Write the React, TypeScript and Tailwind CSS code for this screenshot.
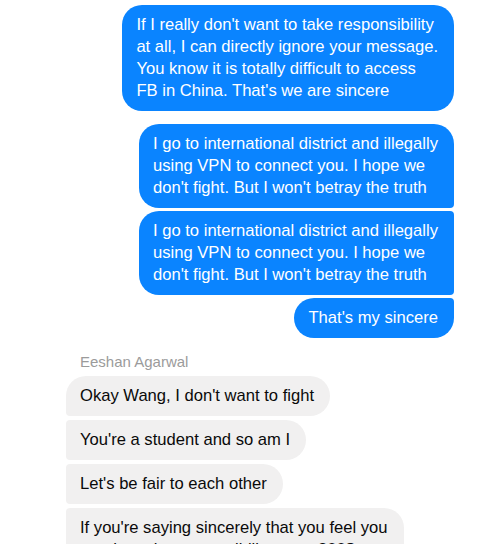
import React from "react";

const font = { fontFamily: '"Liberation Sans", Arial, sans-serif' };

export default function App() {
  return (
    <div
      className="w-[480px] h-[544px] overflow-hidden bg-white text-[16.6px] leading-[22px]"
      style={font}
    >
      <div className="flex flex-col items-end pr-[26px] pt-[5px]">
        <div className="rounded-[20px] bg-[#0a84ff] text-white pl-[14px] pr-[16px] py-[9px] whitespace-nowrap">
          If I really don't want to take responsibility
          <br />
          at all, I can directly ignore your message.
          <br />
          You know it is totally difficult to access
          <br />
          FB in China. That's we are sincere
        </div>
        <div className="mt-[13px] flex flex-col items-end gap-[3px]">
          <div className="rounded-[20px] rounded-br-[4px] bg-[#0a84ff] text-white pl-[14px] pr-[16px] py-[9px] whitespace-nowrap">
            I go to international district and illegally
            <br />
            using VPN to connect you. I hope we
            <br />
            don't fight. But I won't betray the truth
          </div>
          <div className="rounded-l-[20px] rounded-r-[4px] bg-[#0a84ff] text-white pl-[14px] pr-[16px] py-[9px] whitespace-nowrap">
            I go to international district and illegally
            <br />
            using VPN to connect you. I hope we
            <br />
            don't fight. But I won't betray the truth
          </div>
          <div className="rounded-l-[20px] rounded-tr-[4px] rounded-br-[20px] bg-[#0a84ff] text-white pl-[14px] pr-[16px] py-[9px] whitespace-nowrap">
            That's my sincere
          </div>
        </div>
      </div>
      <div className="flex flex-col items-start pl-[66px] mt-[15px]">
        <div className="ml-[14px] text-[15px] leading-[18px] text-[#9b9b9b] mb-[5px]">
          Eeshan Agarwal
        </div>
        <div className="flex flex-col items-start gap-[4px]">
          <div className="rounded-r-[20px] rounded-tl-[20px] rounded-bl-[4px] bg-[#f1f0f0] text-[#0a0a0a] pl-[14px] pr-[16px] py-[9px] whitespace-nowrap">
            Okay Wang, I don't want to fight
          </div>
          <div className="rounded-r-[20px] rounded-l-[4px] bg-[#f1f0f0] text-[#0a0a0a] pl-[14px] pr-[16px] py-[9px] whitespace-nowrap">
            You're a student and so am I
          </div>
          <div className="rounded-r-[20px] rounded-l-[4px] bg-[#f1f0f0] text-[#0a0a0a] pl-[14px] pr-[16px] py-[9px] whitespace-nowrap">
            Let's be fair to each other
          </div>
          <div className="rounded-r-[20px] rounded-tl-[4px] rounded-bl-[20px] bg-[#f1f0f0] text-[#0a0a0a] pl-[14px] pr-[16px] py-[9px] whitespace-nowrap">
            If you're saying sincerely that you feel you
            <br />
            need to take responsibility up to 300$
          </div>
        </div>
      </div>
    </div>
  );
}
